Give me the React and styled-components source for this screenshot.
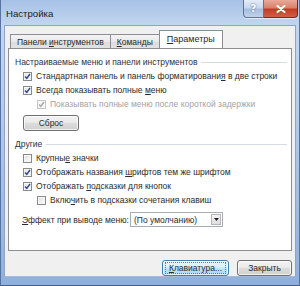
import React from "react";
import styled, { createGlobalStyle } from "styled-components";

const GlobalStyle = createGlobalStyle`
  html, body { margin: 0; padding: 0; background: #fff; }
  body {
    width: 300px; height: 286px; overflow: hidden;
    font-family: "Liberation Sans", Arial, sans-serif;
    font-size: 8.5px; color: #2b2b2b;
  }
`;

const Window = styled.div`
  width: 300px;
  height: 286px;
  box-sizing: border-box;
  display: flex;
  flex-direction: column;
  background: linear-gradient(180deg, #a7c1e6 0%, #c2d6ef 9%, #b4cbea 40%, #8fb0dc 100%);
  border: 1px solid #56749f;
  border-top: none;
  border-bottom-color: #3f5f8f;
`;

const TitleBar = styled.div`
  height: 25px;
  flex: none;
  display: flex;
  align-items: flex-start;
  padding-left: 5px;
  padding-right: 1px;
`;

const Title = styled.div`
  font-size: 9.6px;
  color: #222;
  line-height: 28px;
  flex: 1;
`;

const CaptionButtons = styled.div`
  display: flex;
  height: 18px;
  box-shadow: 0 1px 0 rgba(255,255,255,0.6);
  border-radius: 0 0 4px 4px;
`;

const CaptionButton = styled.div`
  width: ${(p) => p.$w}px;
  height: 18px;
  box-sizing: border-box;
  display: flex;
  align-items: center;
  justify-content: center;
  border: 1px solid ${(p) => (p.$close ? "#6e2a20" : "#5f7596")};
  border-top: none;
  ${(p) => (p.$close ? "border-left: none;" : "")}
  border-radius: ${(p) => (p.$close ? "0 0 4px 0" : "0 0 0 4px")};
  background: ${(p) =>
    p.$close
      ? "linear-gradient(180deg, #e9a999 0%, #d9826c 45%, #c13d24 55%, #d1604a 100%)"
      : "linear-gradient(180deg, #e4ecf6 0%, #c9d8ec 45%, #a9bedc 55%, #bfd2ea 100%)"};
  color: #fff;
  font-weight: bold;
  font-size: 10px;
  font-family: "DejaVu Sans", sans-serif;
  text-shadow: 0 0 2px ${(p) => (p.$close ? "#5a1408" : "#3f577e")};
`;

const Client = styled.div`
  flex: 1;
  margin: 0 3px 8px 3px;
  background: #f0f0f0;
  border: 1px solid #8ea4c6;
  border-bottom-color: #a6b9d6;
  display: flex;
  flex-direction: column;
  padding: 4px 3px 0 3px;
  box-sizing: border-box;
`;

const TabStrip = styled.div`
  display: flex;
  align-items: flex-end;
  height: 18px;
  margin-left: 2px;
  position: relative;
  z-index: 1;
`;

const Tab = styled.div`
  height: ${(p) => (p.$active ? 18 : 15)}px;
  box-sizing: border-box;
  border: 1px solid #8c8e94;
  border-bottom: ${(p) => (p.$active ? "none" : "1px solid #8c8e94")};
  ${(p) => (p.$active ? "" : "margin-bottom: -1px;")}
  margin-left: ${(p) => (p.$active ? -1 : 0)}px;
  background: ${(p) =>
    p.$active ? "#fff" : "linear-gradient(180deg, #f4f4f4 0%, #e9e9e9 50%, #dcdcdc 51%, #e2e2e2 100%)"};
  border-left-width: ${(p) => (p.$first || p.$active ? 1 : 0)}px;
  padding: 0 ${(p) => (p.$active ? 7 : 6)}px;
  display: flex;
  align-items: center;
  justify-content: center;
  min-width: ${(p) => p.$w}px;
  color: #2b2b2b;
  white-space: nowrap;
  ${(p) => (p.$active ? "padding-bottom: 2px; font-size: 9px;" : "")}
`;

const Panel = styled.div`
  height: 203px;
  flex: none;
  box-sizing: border-box;
  background: #fff;
  border: 1px solid #8c8e94;
  padding: 6px 4px 0 6px;
  display: flex;
  flex-direction: column;
`;

const GroupHeader = styled.div`
  height: 14px;
  display: flex;
  align-items: center;
  gap: 4px;
  margin-top: ${(p) => p.$mt || 0}px;
  color: #2a3346;
  white-space: nowrap;
  &::after {
    content: "";
    flex: 1;
    height: 1px;
    background: #d5dbe3;
  }
`;

const Row = styled.div`
  height: 14px;
  display: flex;
  align-items: center;
  gap: 4px;
  padding-left: ${(p) => p.$indent}px;
  color: ${(p) => (p.$disabled ? "#a3a3a3" : "#2b2b2b")};
  white-space: nowrap;
`;

const Box = styled.span`
  width: 9px;
  height: 9px;
  box-sizing: border-box;
  flex: none;
  border: 1px solid ${(p) => (p.$disabled ? "#c4c4c4" : "#8a8a8a")};
  background: ${(p) =>
    p.$disabled ? "#f6f6f6" : "linear-gradient(135deg, #dcdcdc 0%, #f2f2f2 60%, #ffffff 100%)"};
  box-shadow: inset 0 0 0 1px ${(p) => (p.$disabled ? "#fbfbfb" : "#f6f6f6")};
  display: flex;
  align-items: center;
  justify-content: center;
  position: relative;
  top: 0.5px;
`;

const U = styled.span`
  text-decoration: underline;
  text-underline-offset: 1px;
`;

const Button = styled.div`
  width: ${(p) => p.$w}px;
  height: 16px;
  box-sizing: border-box;
  border: 1px solid ${(p) => (p.$default ? "#3c7fb1" : "#707070")};
  border-radius: 3px;
  background: ${(p) =>
    p.$default
      ? "linear-gradient(180deg, #eaf6fd 0%, #d9f0fc 45%, #bee6fd 50%, #a7d9f5 100%)"
      : "linear-gradient(180deg, #f2f2f2 0%, #ebebeb 45%, #dddddd 50%, #cfcfcf 100%)"};
  box-shadow: inset 0 0 0 1px rgba(255,255,255,0.7);
  display: flex;
  align-items: center;
  justify-content: center;
  color: #2b2b2b;
  margin-left: ${(p) => p.$ml || 0}px;
  margin-top: ${(p) => p.$mt || 0}px;
  position: relative;
  white-space: nowrap;
`;

const FocusRing = styled.span`
  border: 1px dotted #6a7a88;
  padding: 0 3px;
  line-height: 10px;
`;

const ComboRow = styled.div`
  display: flex;
  align-items: center;
  height: 15px;
  margin-top: 5px;
  padding-left: 7px;
  white-space: nowrap;
`;

const ComboLabel = styled.span`
  width: 108px;
  flex: none;
`;

const Combo = styled.div`
  width: 93px;
  height: 15px;
  box-sizing: border-box;
  border: 1px solid #a5acb5;
  background: #fff;
  display: flex;
  align-items: stretch;
  padding: 1px;
`;

const ComboText = styled.span`
  flex: 1;
  padding-left: 2px;
  display: flex;
  align-items: center;
`;

const ComboArrow = styled.span`
  width: 10px;
  box-sizing: border-box;
  border: 1px solid #b5b5b5;
  background: linear-gradient(180deg, #f4f4f4, #dedede);
  display: flex;
  align-items: center;
  justify-content: center;
`;

const ButtonBar = styled.div`
  display: flex;
  justify-content: flex-end;
  gap: 8px;
  margin-top: 9px;
`;

const Check = ({ checked, disabled }) => (
  <Box $disabled={disabled}>
    {checked && (
      <svg width="7" height="7" viewBox="0 0 7 7">
        <path
          d="M1 3.5 L2.8 5.5 L6 1"
          fill="none"
          stroke={disabled ? "#a8a8a8" : "#2b4a8a"}
          strokeWidth="1.4"
        />
      </svg>
    )}
  </Box>
);

const Text = ({ t, u }) => {
  if (u == null) return <span>{t}</span>;
  return (
    <span>
      {t.slice(0, u)}
      <U>{t[u]}</U>
      {t.slice(u + 1)}
    </span>
  );
};

const group1 = [
  { t: "Стандартная панель и панель форматирования в две строки", u: 41, checked: true, level: 0 },
  { t: "Всегда показывать полные меню", u: 25, checked: true, level: 0 },
  { t: "Показывать полные меню после короткой задержки", checked: true, level: 1, disabled: true },
];

const group2 = [
  { t: "Крупные значки", u: 6, checked: false, level: 0 },
  { t: "Отображать названия шрифтов тем же шрифтом", u: 20, checked: true, level: 0 },
  { t: "Отображать подсказки для кнопок", u: 11, checked: true, level: 0 },
  { t: "Включить в подсказки сочетания клавиш", u: 4, checked: false, level: 1 },
];

const CheckRow = ({ r }) => (
  <Row $indent={8 + r.level * 14} $disabled={r.disabled}>
    <Check checked={r.checked} disabled={r.disabled} />
    <Text t={r.t} u={r.u} />
  </Row>
);

export default function App() {
  return (
    <>
      <GlobalStyle />
      <Window>
        <TitleBar>
          <Title>Настройка</Title>
          <CaptionButtons>
            <CaptionButton $w={21}>?</CaptionButton>
            <CaptionButton $w={34} $close>
              <svg width="10" height="8" viewBox="0 0 10 8">
                <path d="M1.5 1 L8.5 7 M8.5 1 L1.5 7" stroke="#fff" strokeWidth="2" strokeLinecap="round" />
              </svg>
            </CaptionButton>
          </CaptionButtons>
        </TitleBar>
        <Client>
          <TabStrip>
            <Tab $first $w={98}>
              <Text t="Панели инструментов" u={7} />
            </Tab>
            <Tab $w={48}>
              <Text t="Команды" u={0} />
            </Tab>
            <Tab $active $w={58}>
              <Text t="Параметры" u={0} />
            </Tab>
          </TabStrip>
          <Panel>
            <GroupHeader>Настраиваемые меню и панели инструментов</GroupHeader>
            {group1.map((r) => (
              <CheckRow key={r.t} r={r} />
            ))}
            <Button $w={56} $ml={8} $mt={4}>
              Сброс
            </Button>
            <GroupHeader $mt={6}>Другие</GroupHeader>
            {group2.map((r) => (
              <CheckRow key={r.t} r={r} />
            ))}
            <ComboRow>
              <ComboLabel>
                <Text t="Эффект при выводе меню:" u={0} />
              </ComboLabel>
              <Combo>
                <ComboText>(По умолчанию)</ComboText>
                <ComboArrow>
                  <svg width="5" height="3" viewBox="0 0 5 3">
                    <path d="M0 0 L5 0 L2.5 3 Z" fill="#1e1e1e" />
                  </svg>
                </ComboArrow>
              </Combo>
            </ComboRow>
          </Panel>
          <ButtonBar>
            <Button $w={67} $default>
              <FocusRing>
                <Text t="Клавиатура..." u={0} />
              </FocusRing>
            </Button>
            <Button $w={55}>Закрыть</Button>
          </ButtonBar>
        </Client>
      </Window>
    </>
  );
}
